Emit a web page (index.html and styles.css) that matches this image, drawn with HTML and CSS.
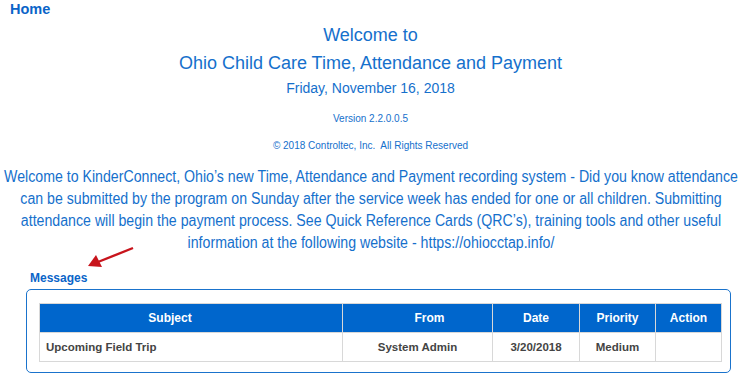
FILE: index.html
```html
<!DOCTYPE html>
<html lang="en">
<head>
    <meta charset="UTF-8">
    <title>Home</title>
    <link rel="stylesheet" href="styles.css">
</head>
<body>
    <div class="home">Home</div>

    <div class="welcome">
        <div class="title">Welcome to</div>
        <div class="title">Ohio Child Care Time, Attendance and Payment</div>
        <div class="date">Friday, November 16, 2018</div>
        <div class="small version">Version 2.2.0.0.5</div>
        <div class="small copy">&copy; 2018 Controltec, Inc.&nbsp; All Rights Reserved</div>
    </div>

    <!-- the intro uses a condensed face; no narrow font installed, so squeeze it -->
    <div class="intro-wrap">
        <p class="intro">Welcome to KinderConnect, Ohio&rsquo;s new Time, Attendance and Payment recording system - Did you know attendance can be submitted by the program on Sunday after the service week has ended for one or all children. Submitting attendance will begin the payment process. See Quick Reference Cards (QRC&rsquo;s), training tools and other useful information at the following website - https://ohiocctap.info/</p>
    </div>

    <div class="messages-head">
        <span class="messages-title">Messages</span>
        <!-- red pointer arrow -->
        <svg class="arrow" width="50" height="24" viewBox="0 0 50 24">
            <line x1="47" y1="2" x2="12" y2="16" stroke="#c8141c" stroke-width="2.4"/>
            <polygon points="2,20 10,9 16,21" fill="#c8141c"/>
        </svg>
    </div>

    <div class="messages-box">
        <table class="grid">
            <thead>
                <tr>
                    <th class="c-subject">Subject</th>
                    <th class="c-from">From</th>
                    <th class="c-date">Date</th>
                    <th class="c-prio">Priority</th>
                    <th class="c-action">Action</th>
                </tr>
            </thead>
            <tbody>
                <tr>
                    <td class="left">Upcoming Field Trip</td>
                    <td>System Admin</td>
                    <td>3/20/2018</td>
                    <td>Medium</td>
                    <td></td>
                </tr>
            </tbody>
        </table>
    </div>
</body>
</html>
```

FILE: styles.css
```css
body {
    margin: 0;
    font-family: 'Liberation Sans', Arial, sans-serif;
    color: #1570cc;
    background: #fff;
}

.home {
    font-size: 14.5px;
    font-weight: bold;
    color: #0a64c8;
    padding: 1px 0 0 10px;
    line-height: 16px;
}

/* Welcome block */
.welcome {
    text-align: center;
}

.title {
    font-size: 18px;
    line-height: 28px;
}

.welcome .title:first-child {
    margin-top: 4px;
}

.date {
    font-size: 14px;
    line-height: 20px;
    margin-top: 1px;
}

.small {
    font-size: 10px;
}

.version {
    margin-top: 15px;
}

.copy {
    margin-top: 16px;
}

.intro-wrap {
    overflow: hidden;
    margin-top: 15px;
}

.intro {
    width: 832px;
    margin: 0 0 0 -45.5px;
    font-size: 16px;
    line-height: 22px;
    text-align: center;
    transform: scaleX(0.885);
    transform-origin: 50% 0;
}

/* Messages */
.messages-head {
    position: relative;
    margin: 14px 0 0 30px;
    height: 16px;
}

.messages-title {
    font-size: 12px;
    font-weight: bold;
    color: #0a64c8;
}

.arrow {
    position: absolute;
    left: 56px;
    top: -22px;
}

.messages-box {
    margin: 5px 10px 0 26px;
    border: 1px solid #1a73cc;
    border-radius: 5px;
    padding: 13px 10px 10px 12px;
}

.grid {
    width: 100%;
    border-collapse: collapse;
    table-layout: fixed;
}

.grid th,
.grid td {
    padding: 0;
    height: 28px;
    border: 1px solid #d8d8d8;
}

.grid th {
    background: #0066cc;
    color: #fff;
    font-size: 12px;
    border-bottom: none;
}

.grid td {
    color: #444;
    font-size: 11.5px;
    font-weight: bold;
    text-align: center;
}

.grid td.left {
    text-align: left;
    padding-left: 6px;
}

.grid th.c-subject { width: 260px; padding-right: 42px; }
.grid th.c-from { width: 125px; padding-left: 24px; }
.c-date { width: 86px; }
.c-prio { width: 75px; }
.c-action { width: 65px; }
```
